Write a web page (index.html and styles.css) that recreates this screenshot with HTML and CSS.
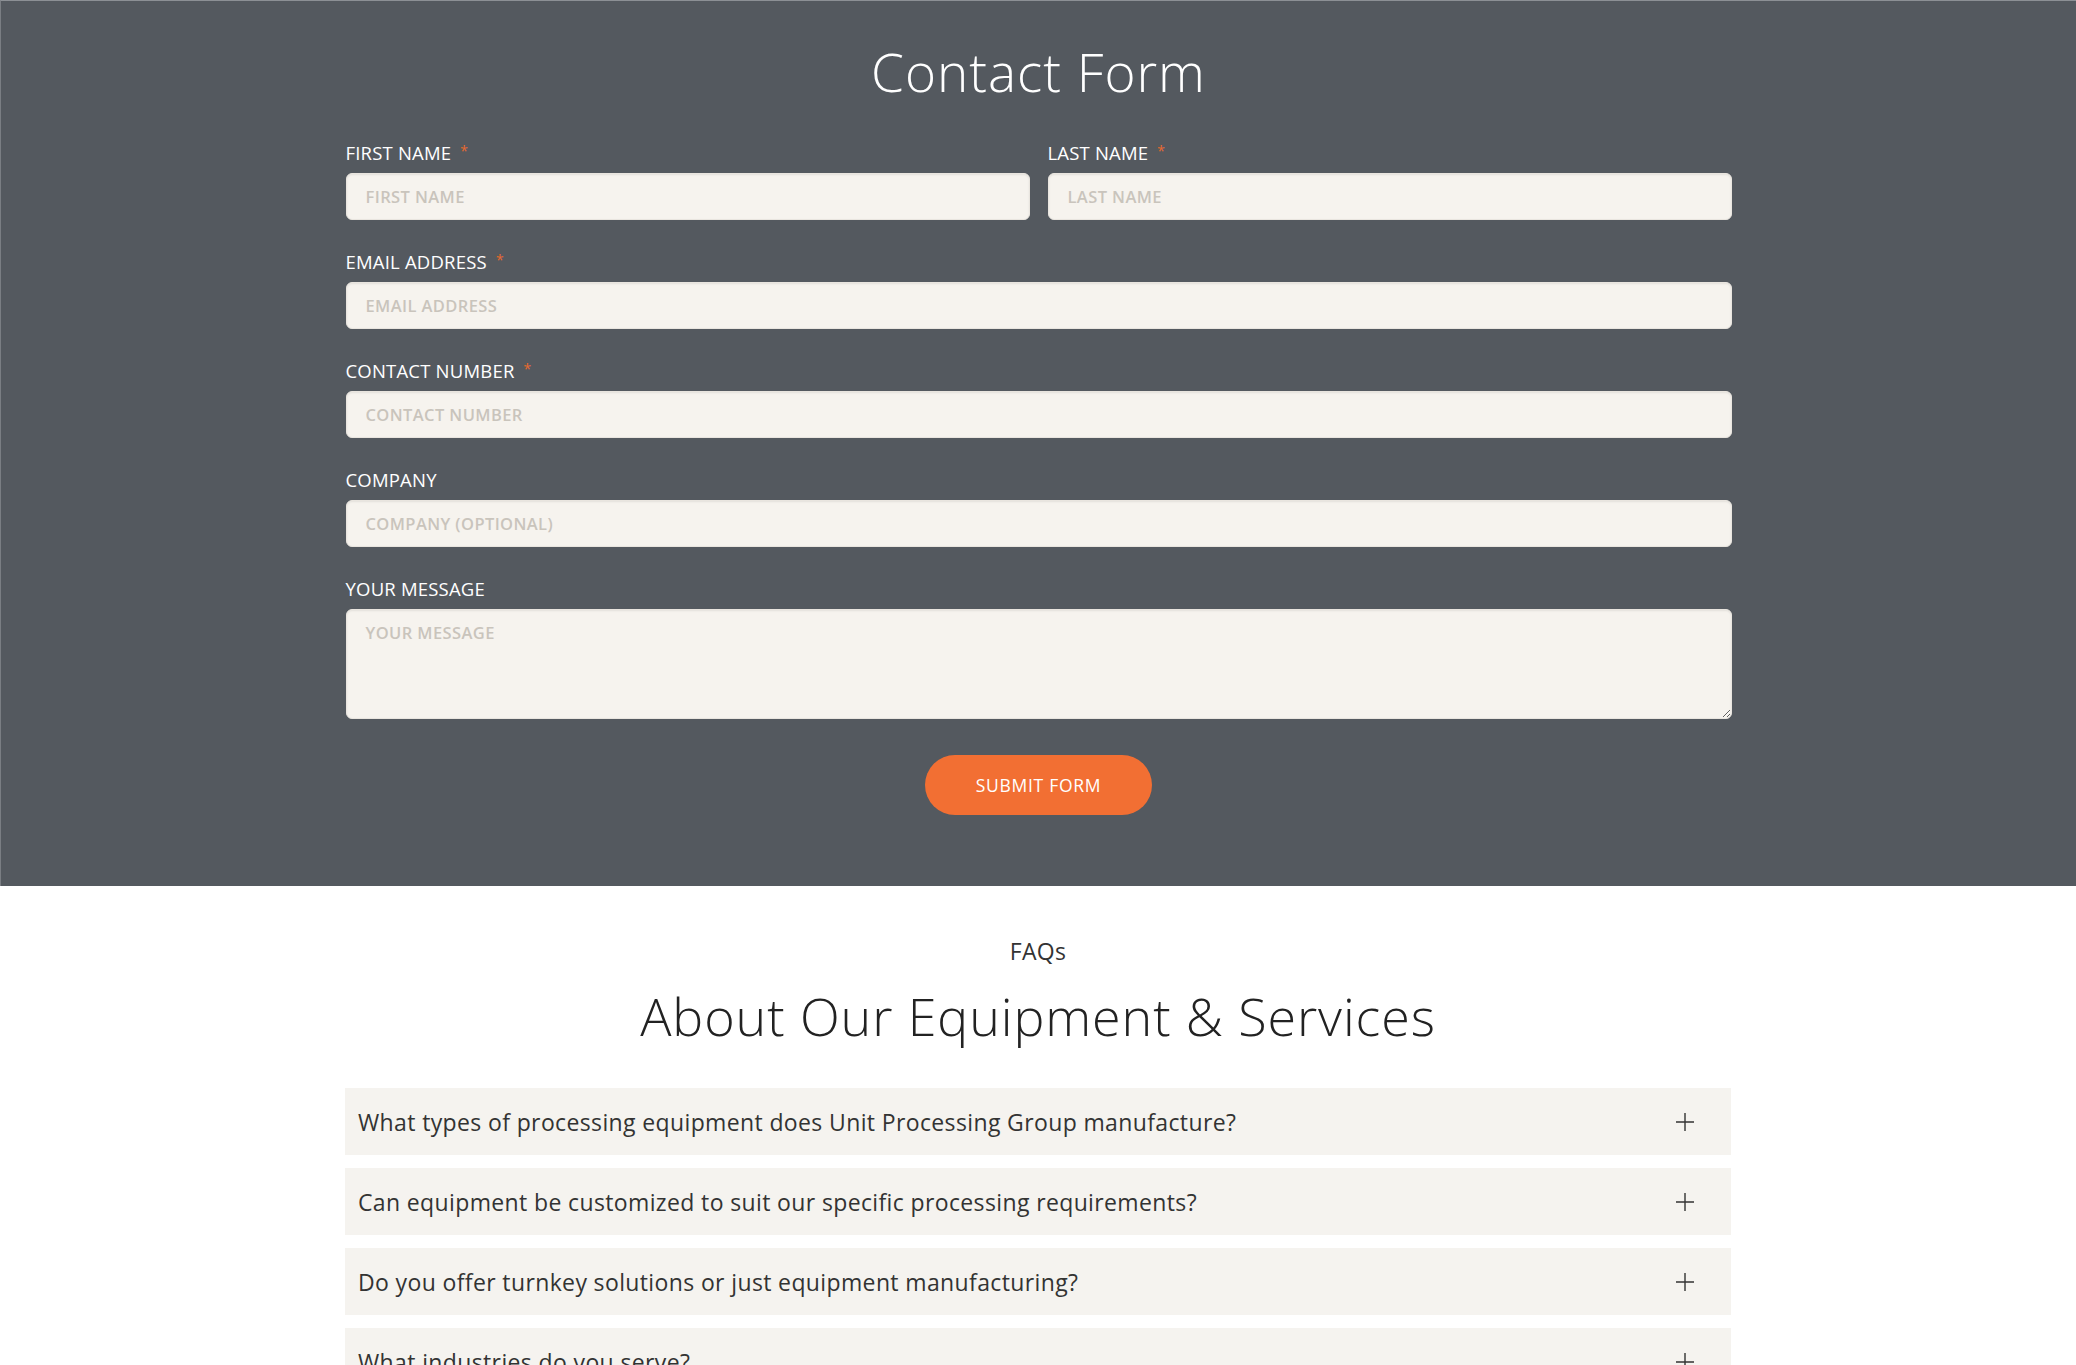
FILE: index.html
```html
<!DOCTYPE html>
<html lang="en">
<head>
<meta charset="utf-8">
<title>Contact Form</title>
<link rel="stylesheet" href="styles.css">
</head>
<body>
<section class="contact">
  <h1 class="contact-title">Contact Form</h1>
  <form class="form">
    <div class="row two">
      <div class="field">
        <label class="label">FIRST NAME<span class="req">*</span></label>
        <input class="input" type="text" placeholder="FIRST NAME">
      </div>
      <div class="field">
        <label class="label">LAST NAME<span class="req">*</span></label>
        <input class="input" type="text" placeholder="LAST NAME">
      </div>
    </div>
    <div class="field">
      <label class="label">EMAIL ADDRESS<span class="req">*</span></label>
      <input class="input" type="email" placeholder="EMAIL ADDRESS">
    </div>
    <div class="field">
      <label class="label">CONTACT NUMBER<span class="req">*</span></label>
      <input class="input" type="tel" placeholder="CONTACT NUMBER">
    </div>
    <div class="field">
      <label class="label">COMPANY</label>
      <input class="input" type="text" placeholder="COMPANY (OPTIONAL)">
    </div>
    <div class="field">
      <label class="label">YOUR MESSAGE</label>
      <textarea class="input textarea" placeholder="YOUR MESSAGE"></textarea>
    </div>
    <div class="actions">
      <button class="submit" type="button">SUBMIT FORM</button>
    </div>
  </form>
</section>
<section class="faq">
  <div class="faq-eyebrow">FAQs</div>
  <h2 class="faq-title">About Our Equipment &amp; Services</h2>
  <div class="faq-list">
    <div class="faq-item"><span class="q">What types of processing equipment does Unit Processing Group manufacture?</span><svg class="plus" viewBox="0 0 20 20"><path d="M10 1v18M1 10h18"/></svg></div>
    <div class="faq-item"><span class="q">Can equipment be customized to suit our specific processing requirements?</span><svg class="plus" viewBox="0 0 20 20"><path d="M10 1v18M1 10h18"/></svg></div>
    <div class="faq-item"><span class="q">Do you offer turnkey solutions or just equipment manufacturing?</span><svg class="plus" viewBox="0 0 20 20"><path d="M10 1v18M1 10h18"/></svg></div>
    <div class="faq-item"><span class="q">What industries do you serve?</span><svg class="plus" viewBox="0 0 20 20"><path d="M10 1v18M1 10h18"/></svg></div>
  </div>
</section>
</body>
</html>
```
FILE: styles.css
```css
html, body {
  margin: 0;
  padding: 0;
  background: #ffffff;
  font-family: "Open Sans", "Liberation Sans", sans-serif;
  overflow: hidden;
  height: 1365px;
}

.contact {
  background: #54595f;
  border-top: 1px solid #8c9095;
  border-left: 1px solid #7a7e83;
  padding: 39px 0 72px;
  box-sizing: border-box;
  height: 886px;
}

.contact-title {
  margin: 0;
  text-align: center;
  color: #ffffff;
  font-weight: 300;
  font-size: 53px;
  line-height: 64px;
  letter-spacing: 1px;
}

.form {
  width: 1386px;
  margin: 37px auto 0;
  display: flex;
  flex-direction: column;
  gap: 30px;
}

.row.two {
  display: grid;
  grid-template-columns: 1fr 1fr;
  gap: 18px;
}

.field {
  display: flex;
  flex-direction: column;
  gap: 8px;
}

.label {
  display: block;
  height: 24px;
  color: #ffffff;
  font-size: 18.5px;
  font-weight: 500;
  line-height: 24px;
  letter-spacing: 0.2px;
}

.req {
  position: relative;
  top: -4px;
  color: #e8692f;
  font-size: 14px;
  margin-left: 9px;
}

.input {
  box-sizing: border-box;
  height: 47px;
  width: 100%;
  background: #f6f3ee;
  border: 1px solid #e9e5df;
  border-radius: 6px;
  padding: 0 19px;
  font-family: inherit;
  font-size: 16.5px;
  font-weight: 600;
  letter-spacing: 0.4px;
  color: #333;
  outline: none;
  box-shadow: inset 0 1px 2px rgba(0,0,0,0.08);
}

.input::placeholder {
  color: #c9c4bc;
}

.textarea {
  height: 110px;
  padding: 11px 19px;
  resize: vertical;
}

.actions {
  display: flex;
  justify-content: center;
  margin-top: 6px;
}

.submit {
  width: 227px;
  height: 60px;
  border: none;
  border-radius: 30px;
  background: #f26f33;
  color: #ffffff;
  font-family: inherit;
  font-size: 17.5px;
  font-weight: 500;
  letter-spacing: 0.7px;
  cursor: pointer;
}

.faq {
  padding-top: 49px;
  text-align: center;
}

.faq-eyebrow {
  font-size: 23px;
  line-height: 32px;
  color: #333333;
  font-weight: 400;
  letter-spacing: 0.3px;
}

.faq-title {
  margin: 17px 0 0;
  font-size: 52px;
  line-height: 64px;
  font-weight: 300;
  color: #222222;
  letter-spacing: 0.9px;
}

.faq-list {
  width: 1386px;
  margin: 40px auto 0;
  display: flex;
  flex-direction: column;
  gap: 13px;
  text-align: left;
}

.faq-item {
  height: 67px;
  background: #f5f3ef;
  display: flex;
  align-items: center;
  justify-content: space-between;
  padding: 0 36px 0 13px;
  box-sizing: border-box;
}

.q {
  font-size: 23px;
  color: #333333;
  font-weight: 400;
  letter-spacing: 0.37px;
}

.plus {
  width: 20px;
  height: 20px;
  stroke: #333;
  stroke-width: 1.4;
  fill: none;
}
```
